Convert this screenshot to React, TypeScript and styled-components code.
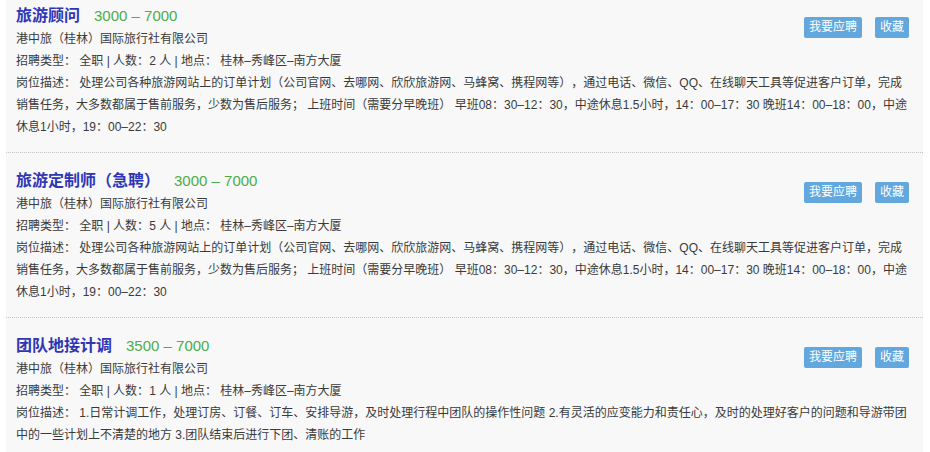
import styled, { createGlobalStyle } from "styled-components";

const GlobalStyle = createGlobalStyle`
  html, body {
    margin: 0;
    padding: 0;
    background: #ffffff;
  }
  body {
    font-family: "Liberation Sans", "Noto Sans CJK SC", sans-serif;
    text-spacing-trim: space-all;
    overflow: hidden;
  }
`;

const Page = styled.div`
  width: 930px;
  height: 452px;
  overflow: hidden;
  padding: 0 7px 0 6px;
  box-sizing: border-box;
`;

const List = styled.div`
  background: #f8f8f8;
`;

const Item = styled.div`
  padding: 16px 14px 14px 10px;
  border-bottom: 1px dotted #c4c4c4;
  &:first-child {
    padding-top: 4px;
  }
`;

const Top = styled.div`
  display: flex;
  align-items: flex-start;
  justify-content: space-between;
`;

const Info = styled.div`
  display: flex;
  flex-direction: column;
`;

const TitleRow = styled.div`
  display: flex;
  align-items: baseline;
  height: 24px;
  line-height: 24px;
`;

const Title = styled.span`
  font-size: 16px;
  font-weight: bold;
  color: #2f36b6;
`;

const Salary = styled.span`
  margin-left: 14px;
  font-size: 15px;
  color: #4dab4a;
`;

const Line = styled.div`
  font-size: 12px;
  line-height: 22px;
  color: #3a3a3a;
  text-spacing-trim: space-all;
`;

const Actions = styled.div`
  display: flex;
  gap: 13px;
  margin-top: 13px;
`;

const Button = styled.button`
  height: 21px;
  padding: 0 5px;
  border: none;
  border-radius: 2px;
  background: #62a7de;
  color: #ffffff;
  font-family: "Liberation Sans", "Noto Sans CJK SC", sans-serif;
  font-size: 12px;
  line-height: 21px;
  cursor: pointer;
`;

type Job = {
  title: string;
  salary: string;
  count: number;
  desc: string;
};

const jobs: Job[] = [
  {
    title: "旅游顾问",
    salary: "3000 – 7000",
    count: 2,
    desc:
      "处理公司各种旅游网站上的订单计划（公司官网、去哪网、欣欣旅游网、马蜂窝、携程网等），通过电话、微信、QQ、在线聊天工具等促进客户订单，完成销售任务，大多数都属于售前服务，少数为售后服务； 上班时间（需要分早晚班） 早班08：30–12：30，中途休息1.5小时，14：00–17：30 晚班14：00–18：00，中途休息1小时，19：00–22：30",
  },
  {
    title: "旅游定制师（急聘）",
    salary: "3000 – 7000",
    count: 5,
    desc:
      "处理公司各种旅游网站上的订单计划（公司官网、去哪网、欣欣旅游网、马蜂窝、携程网等），通过电话、微信、QQ、在线聊天工具等促进客户订单，完成销售任务，大多数都属于售前服务，少数为售后服务； 上班时间（需要分早晚班） 早班08：30–12：30，中途休息1.5小时，14：00–17：30 晚班14：00–18：00，中途休息1小时，19：00–22：30",
  },
  {
    title: "团队地接计调",
    salary: "3500 – 7000",
    count: 1,
    desc:
      "1.日常计调工作，处理订房、订餐、订车、安排导游，及时处理行程中团队的操作性问题 2.有灵活的应变能力和责任心，及时的处理好客户的问题和导游带团中的一些计划上不清楚的地方 3.团队结束后进行下团、清账的工作",
  },
];

export default function App() {
  return (
    <>
      <GlobalStyle />
      <Page>
        <List>
          {jobs.map((job) => (
            <Item key={job.title}>
              <Top>
                <Info>
                  <TitleRow>
                    <Title>{job.title}</Title>
                    <Salary>{job.salary}</Salary>
                  </TitleRow>
                  <Line>港中旅（桂林）国际旅行社有限公司</Line>
                  <Line>
                    招聘类型： 全职 | 人数：{job.count} 人 | 地点： 桂林–秀峰区–南方大厦
                  </Line>
                </Info>
                <Actions>
                  <Button>我要应聘</Button>
                  <Button>收藏</Button>
                </Actions>
              </Top>
              <Line>岗位描述： {job.desc}</Line>
            </Item>
          ))}
        </List>
      </Page>
    </>
  );
}
